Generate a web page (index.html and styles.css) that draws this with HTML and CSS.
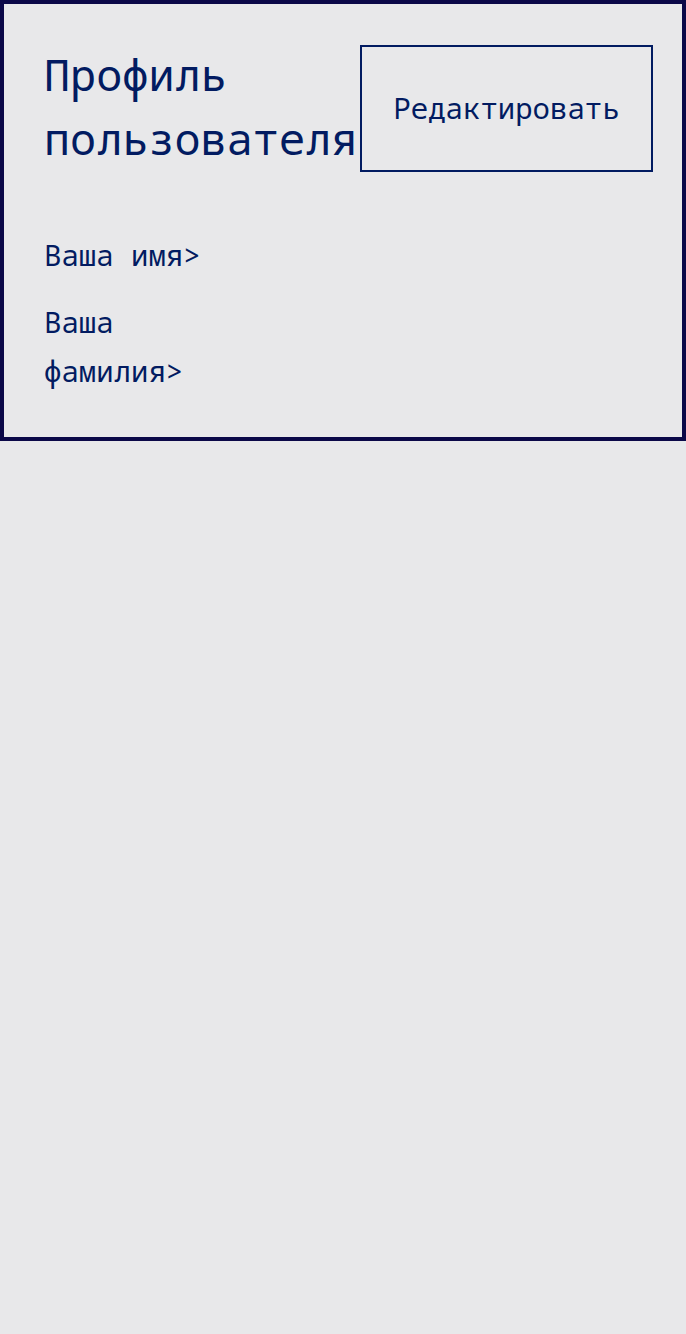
FILE: index.html
```html
<!DOCTYPE html>
<html lang="ru">
<head>
<meta charset="utf-8">
<link rel="stylesheet" href="styles.css">
</head>
<body>
<div class="profile">
  <div class="header">
    <h1 class="title">Профиль пользователя</h1>
    <button class="edit">Редактировать</button>
  </div>
  <ul class="fields">
    <li class="field">Ваша имя&gt;</li>
    <li class="field">Ваша фамилия&gt;</li>
  </ul>
</div>
</body>
</html>
```
FILE: styles.css
```css
html, body {
  margin: 0;
  padding: 0;
  background: #e8e8ea;
}
body {
  font-family: "Noto Sans Mono", "Liberation Mono", monospace;
  font-size: 29px;
  color: #021b61;
}
.profile {
  border: 4px solid #0b0848;
  padding: 39px 29px 42px 40px;
}
.header {
  display: flex;
  justify-content: space-between;
  align-items: flex-start;
}
.title {
  margin: 0;
  width: 317px;
  font-size: 43.5px;
  font-weight: 400;
  line-height: 63.5px;
}
.edit {
  flex: none;
  margin-top: 2px;
  width: 293px;
  height: 127px;
  background: transparent;
  border: 2px solid #021b61;
  color: #021b61;
  font-family: "Noto Sans Mono", "Liberation Mono", monospace;
  font-size: 29px;
  padding: 0 0 2px 0;
}
.fields {
  list-style: none;
  margin: 58px 0 0 0;
  padding: 0;
  width: 180px;
}
.field {
  line-height: 49px;
  margin-bottom: 18px;
}
.field:last-child {
  margin-bottom: 0;
}
```
